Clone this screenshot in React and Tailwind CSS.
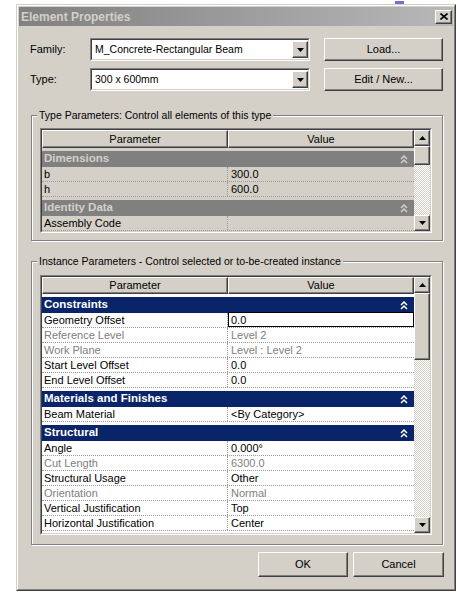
import React from "react";

// Win classic bevels
const raised =
  "bg-[#d4d0c8] border border-t-white border-l-white border-r-[#404040] border-b-[#404040] shadow-[inset_-1px_-1px_0_#808080]";

function Sunken({ className = "", innerClass = "", children }) {
  return (
    <div className={"border border-t-[#808080] border-l-[#808080] border-r-white border-b-white " + className}>
      <div className={"h-full border border-t-[#404040] border-l-[#404040] border-r-[#d4d0c8] border-b-[#d4d0c8] " + innerClass}>
        {children}
      </div>
    </div>
  );
}

function Tri({ up }) {
  return (
    <svg width="7" height="4" viewBox="0 0 7 4">
      {up ? <path d="M3.5 0 L7 4 L0 4 Z" fill="#000" /> : <path d="M0 0 L7 0 L3.5 4 Z" fill="#000" />}
    </svg>
  );
}

function Chevrons() {
  return (
    <svg width="8" height="9" viewBox="0 0 8 9">
      <path d="M1 4 L4 1 L7 4 M1 8 L4 5 L7 8" stroke="currentColor" strokeWidth="1.5" fill="none" />
    </svg>
  );
}

function Combo({ value }) {
  return (
    <Sunken className="w-[220px] h-[23px]" innerClass="bg-white flex items-center">
      <span className="flex-1 pl-[3px] text-[10.5px] text-black">{value}</span>
      <div className={raised + " w-[16px] h-[17px] flex items-center justify-center"}>
        <Tri />
      </div>
    </Sunken>
  );
}

function Button({ label, className = "" }) {
  return (
    <div className={raised + " flex items-center justify-center text-[11px] text-black " + className}>
      {label}
    </div>
  );
}

function Scrollbar({ thumb }) {
  return (
    <div className="w-[16px] flex flex-col">
      <div className={raised + " h-[16px] flex items-center justify-center"}>
        <Tri up />
      </div>
      <div className={raised} style={{ height: thumb }} />
      <div className="flex-1 bg-[repeating-conic-gradient(#ffffff_0%_25%,#d4d0c8_0%_50%)] bg-[length:2px_2px]" />
      <div className={raised + " h-[16px] flex items-center justify-center"}>
        <Tri />
      </div>
    </div>
  );
}

function Header({ tall }) {
  return (
    <div className={"flex text-[11px] text-black " + (tall ? "h-[18px]" : "h-[17px]")}>
      <div className={raised + " w-[186px] flex items-center justify-center"}>Parameter</div>
      <div className={raised + " flex-1 flex items-center justify-center"}>Value</div>
    </div>
  );
}

function Category({ label, active }) {
  return (
    <div className="pt-[3px]">
      <div
        className={
          "h-[16px] flex items-center justify-between pl-[2px] pr-[6px] font-bold text-[11.5px] " +
          (active ? "bg-[#0a246a] text-white" : "bg-[#808080] text-[#d4d0c8]")
        }
      >
        <span>{label}</span>
        <Chevrons />
      </div>
    </div>
  );
}

function Row({ name, value, dim, selected }) {
  const c = dim ? "text-[#808080]" : "text-black";
  return (
    <div className={"flex h-[15px] text-[11px] leading-[14px] border-b border-dotted border-[#9a9a9a] " + c}>
      <div className="w-[186px] pl-[2px] border-r border-dotted border-[#9a9a9a] whitespace-nowrap">{name}</div>
      {selected ? (
        <div className="flex-1 -mt-px h-[15px] border border-black bg-white pl-[2px] text-black">{value}</div>
      ) : (
        <div className="flex-1 pl-[3px] whitespace-nowrap">{value}</div>
      )}
    </div>
  );
}

function Group({ legend, className = "", children }) {
  return (
    <fieldset
      className={
        "border border-[#808080] shadow-[1px_1px_0_#fff,inset_1px_1px_0_#fff] w-[412px] ml-[12px] pl-[8px] pr-[10px] " +
        className
      }
    >
      <legend className="-ml-[3px] px-[2px] bg-[#d4d0c8] text-[10.5px] leading-[13px] text-black">{legend}</legend>
      {children}
    </fieldset>
  );
}

export default function App() {
  const instanceRows = [
    { cat: "Constraints" },
    { name: "Geometry Offset", value: "0.0", selected: true },
    { name: "Reference Level", value: "Level 2", dim: true },
    { name: "Work Plane", value: "Level : Level 2", dim: true },
    { name: "Start Level Offset", value: "0.0" },
    { name: "End Level Offset", value: "0.0" },
    { cat: "Materials and Finishes" },
    { name: "Beam Material", value: "<By Category>" },
    { cat: "Structural" },
    { name: "Angle", value: "0.000°" },
    { name: "Cut Length", value: "6300.0", dim: true },
    { name: "Structural Usage", value: "Other" },
    { name: "Orientation", value: "Normal", dim: true },
    { name: "Vertical Justification", value: "Top" },
    { name: "Horizontal Justification", value: "Center" },
  ];

  return (
    <div className="w-[460px] h-[592px] bg-white overflow-hidden font-['Liberation_Sans',Arial,sans-serif]">
      <div className="h-[4px] pt-[1px]">
        <div className="ml-[395px] w-[9px] h-[3px] bg-[#7070d8]" />
      </div>

      {/* dialog frame */}
      <div className="ml-[16px] w-[440px] h-[587px] border border-t-[#d4d0c8] border-l-[#d4d0c8] border-r-[#404040] border-b-[#404040]">
        <div className="h-full border border-t-white border-l-white border-r-[#808080] border-b-[#808080] bg-[#d4d0c8] p-px">
          {/* title bar */}
          <div className="h-[19px] flex items-center justify-between pl-[2px] pr-[1px] bg-gradient-to-r from-[#808080] to-[#b8b8b8]">
            <span className="text-[12px] font-bold text-[#d4d0c8]">Element Properties</span>
            <div className={raised + " w-[17px] h-[14px] flex items-center justify-center"}>
              <svg width="8" height="7" viewBox="0 0 8 7">
                <path d="M0.5 0.5 L7.5 6.5 M7.5 0.5 L0.5 6.5" stroke="#000" strokeWidth="1.6" />
              </svg>
            </div>
          </div>

          {/* family / type */}
          <div className="mt-[12px] flex items-center h-[23px]">
            <span className="ml-[11px] w-[60px] text-[11px] text-black">Family:</span>
            <Combo value="M_Concrete-Rectangular Beam" />
            <Button label="Load..." className="ml-[14px] w-[119px] h-[23px]" />
          </div>
          <div className="mt-[7px] flex items-center h-[23px]">
            <span className="ml-[11px] w-[60px] text-[11px] text-black">Type:</span>
            <Combo value="300 x 600mm" />
            <Button label="Edit / New..." className="ml-[14px] w-[119px] h-[23px]" />
          </div>

          {/* type parameters */}
          <Group legend="Type Parameters: Control all elements of this type" className="mt-[18px] pt-[6px] pb-[7px]">
            <Sunken className="h-[105px]" innerClass="flex">
              <div className="flex-1 bg-[#d4d0c8]">
                <Header tall />
                <Category label="Dimensions" />
                <Row name="b" value="300.0" />
                <Row name="h" value="600.0" />
                <Category label="Identity Data" />
                <Row name="Assembly Code" value="" />
              </div>
              <Scrollbar thumb={19} />
            </Sunken>
          </Group>

          {/* instance parameters */}
          <Group
            legend="Instance Parameters - Control selected or to-be-created instance"
            className="mt-[14px] pt-[7px] pb-[9px]"
          >
            <Sunken className="h-[260px]" innerClass="flex">
              <div className="flex-1 bg-white overflow-hidden">
                <Header />
                {instanceRows.map((r, i) =>
                  r.cat ? (
                    <Category key={i} label={r.cat} active />
                  ) : (
                    <Row key={i} name={r.name} value={r.value} dim={r.dim} selected={r.selected} />
                  )
                )}
              </div>
              <Scrollbar thumb={67} />
            </Sunken>
          </Group>

          {/* buttons */}
          <div className="mt-[7px] flex justify-end gap-[5px] pr-[9px]">
            <Button label="OK" className="w-[90px] h-[25px]" />
            <Button label="Cancel" className="w-[91px] h-[25px]" />
          </div>
        </div>
      </div>
    </div>
  );
}
